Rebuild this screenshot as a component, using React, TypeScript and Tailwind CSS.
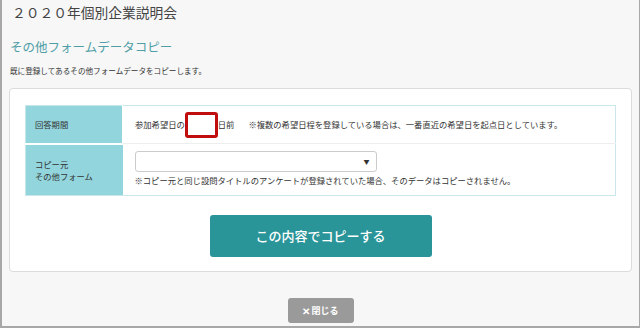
import React from "react";

const font = { fontFamily: '"Noto Sans CJK JP", "Noto Sans", sans-serif' };

export default function App() {
  return (
    <div
      className="h-[328px] w-[640px] overflow-hidden border-b-2 border-l-2 border-r border-[#a8a8a8] bg-[#f7f7f7] text-[#333]"
      style={font}
    >
      <div className="px-[10px] pt-[2px]">
        <h1 className="text-[13.75px] leading-[20px] text-[#444]">２０２０年個別企業説明会</h1>
      </div>
      <div className="px-[8px] pt-[16px]">
        <h2 className="text-[12.5px] leading-[18px] text-[#4f9ea6]">その他フォームデータコピー</h2>
        <p className="mt-[9px] text-[7.6px] leading-[12px] text-[#333]">既に登録してあるその他フォームデータをコピーします。</p>
      </div>

      <div className="mx-[7px] mt-[11px] rounded-[4px] border border-[#dcdcdc] bg-white px-[15px] pt-[16px] pb-[14px]">
        <table className="w-full border-collapse border border-[#c9e7ea] text-[8.3px]">
          <tbody>
            <tr className="h-[38px]">
              <th className="w-[97px] border-b-2 border-r border-white bg-[#92d5dc] pl-[9px] text-left font-normal">回答期間</th>
              <td className="bg-white pl-[12px]">
                <div className="flex items-center">
                  <span>参加希望日の</span>
                  <span className="h-[26px] w-[33px] rounded-[3px] border-[3px] border-[#c00d0d] bg-white" />
                  <span>日前</span>
                  <span className="ml-[14px]">※複数の希望日程を登録している場合は、一番直近の希望日を起点日としています。</span>
                </div>
              </td>
            </tr>
            <tr className="h-[51px]">
              <th className="bg-[#92d5dc] pl-[9px] text-left font-normal leading-[12px]">
                コピー元<br />その他フォーム
              </th>
              <td className="border-t border-[#eeeeee] bg-white pl-[12px] pt-[7px] pb-[9px] align-top">
                <div className="flex h-[21px] w-[242px] items-center justify-end rounded-[3px] border border-[#cccccc] pr-[6px] text-[6px]">▼</div>
                <p className="mt-[2px] leading-[12px]">※コピー元と同じ設問タイトルのアンケートが登録されていた場合、そのデータはコピーされません。</p>
              </td>
            </tr>
          </tbody>
        </table>
        <div className="mt-[19px] flex justify-center">
          <button className="h-[42px] w-[222px] rounded-[3px] bg-[#2a9599] text-[13px] font-medium text-white">この内容でコピーする</button>
        </div>
      </div>

      <div className="flex justify-center pt-[26px]">
        <button className="flex h-[25px] w-[66px] items-center justify-center rounded-[3px] bg-[#9a9a9a] text-[9px] font-bold text-white">
          <span className="mr-[1px] text-[10px]">✕</span>閉じる
        </button>
      </div>
    </div>
  );
}
